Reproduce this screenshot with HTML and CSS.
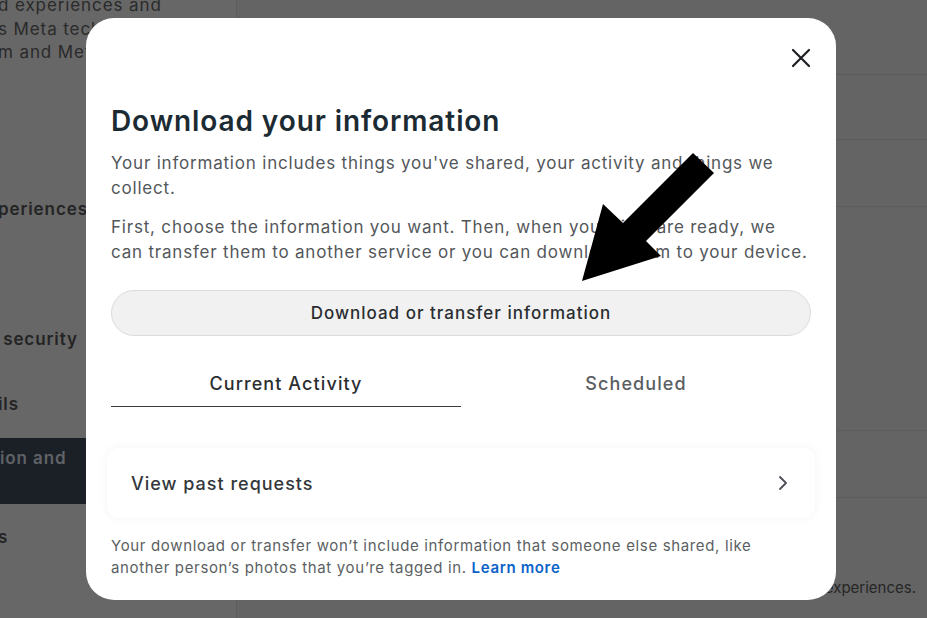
FILE: index.html
```html
<!DOCTYPE html>
<html lang="en">
<head>
<meta charset="utf-8">
<title>Download your information</title>
<link rel="stylesheet" href="styles.css">
</head>
<body>
<div class="page">
  <aside class="sidebar">
    <div class="side-intro">
      <div class="intro-line">d experiences and</div>
      <div class="intro-line">s Meta technologies</div>
      <div class="intro-line">m and Meta</div>
    </div>
    <div class="side-item item-exp">periences</div>
    <div class="side-item item-sec">&nbsp;security</div>
    <div class="side-item item-det">ils</div>
    <div class="side-item item-sel">ion and</div>
    <div class="side-item item-ads">s</div>
  </aside>
  <main class="main">
    <div class="row r1"></div>
    <div class="row r2"></div>
    <div class="row r3"></div>
    <div class="row r4"></div>
    <div class="row r5"></div>
    <div class="row r6"><span class="main-note">Manage your information and experiences.</span></div>
  </main>
</div>

<div class="modal">
  <div class="modal-head">
    <button class="close" aria-label="Close">
      <svg viewBox="0 0 20 20" width="20" height="20"><path d="M2 2 L18 18 M18 2 L2 18" stroke="#1c1e21" stroke-width="2.2" stroke-linecap="round" fill="none"/></svg>
    </button>
  </div>
  <h1 class="title">Download your information</h1>
  <p class="para p1">Your information includes things you've shared, your activity and things we collect.</p>
  <p class="para p2">First, choose the information you want. Then, when your files are ready, we can transfer them to another service or you can download them to your device.</p>
  <button class="primary">Download or transfer information</button>
  <div class="tabs">
    <div class="tab active">Current Activity</div>
    <div class="tab">Scheduled</div>
  </div>
  <div class="card">
    <span class="card-label">View past requests</span>
    <svg class="chev" viewBox="0 0 12 16" width="12" height="16"><path d="M3 2 L9 8 L3 14" stroke="#4b4f56" stroke-width="1.8" fill="none" stroke-linecap="round" stroke-linejoin="round"/></svg>
  </div>
  <p class="foot">Your download or transfer won’t include information that someone else shared, like another person’s photos that you’re tagged in. <a href="#" class="learn">Learn more</a></p>
</div>

<svg class="arrow" width="927" height="618" viewBox="0 0 927 618">
  <polygon points="693,153 714,173 646,241 661,256 582,281 603,204 623,223" fill="#000"/>
</svg>
</body>
</html>
```

FILE: styles.css
```css
* { box-sizing: border-box; }
html, body {
  margin: 0;
  padding: 0;
  width: 927px;
  height: 618px;
  overflow: hidden;
  background: #646464;
  font-family: "Inter", "Noto Sans", sans-serif;
}
.page {
  display: flex;
  height: 618px;
}
.sidebar {
  width: 237px;
  flex: none;
  background: #676767;
  border-right: 1px solid #5d5d5d;
  overflow: hidden;
  font-size: 17px;
  letter-spacing: 0.9px;
}
.side-intro {
  margin-top: -6px;
  margin-left: -2px;
  color: #2a2a2a;
}
.intro-line {
  line-height: 23.5px;
  white-space: nowrap;
}
.side-item {
  font-weight: 600;
  line-height: 24px;
  white-space: nowrap;
  color: #242424;
  margin-left: -2px;
}
.item-exp { margin-top: 132px; }
.item-sec { margin-top: 106px; }
.item-det { margin-top: 41px; }
.item-sel {
  margin-top: 22px;
  margin-left: 0;
  height: 66px;
  padding-top: 8px;
  padding-left: 0;
  background: #1b2027;
  color: #5f6266;
}
.item-ads { margin-top: 21px; }
.main {
  flex: 1;
  display: flex;
  flex-direction: column;
}
.row { border-bottom: 1px solid #5b5b5b; }
.r1 { height: 75px; }
.r2 { height: 65px; }
.r3 { height: 67px; }
.r4 { height: 224px; border-bottom: 1px solid #5d5d5d; }
.r5 { height: 67px; }
.r6 {
  flex: 1;
  border-bottom: none;
  display: flex;
  justify-content: flex-end;
  align-items: flex-end;
  padding: 0 11px 21px 0;
}
.main-note {
  font-size: 15px;
  color: #262626;
  white-space: nowrap;
}

.modal {
  position: absolute;
  left: 86px;
  top: 18px;
  width: 750px;
  height: 582px;
  background: #fff;
  border-radius: 28px;
  padding: 22px 25px 0 25px;
  display: flex;
  flex-direction: column;
}
.modal-head {
  height: 36px;
  display: flex;
  justify-content: flex-end;
  align-items: center;
}
.close {
  border: none;
  background: none;
  padding: 0;
  width: 20px;
  height: 20px;
  display: flex;
}
.title {
  margin: 27px 0 0 0;
  font-size: 28px;
  line-height: 36px;
  font-weight: 600;
  color: #1c2b33;
  letter-spacing: 0.9px;
}
.para {
  margin: 0;
  font-size: 17px;
  line-height: 25px;
  color: #53575b;
  letter-spacing: 0.8px;
}
.p1 { margin-top: 12px; }
.p2 { margin-top: 14px; }
.primary {
  margin-top: 25px;
  height: 46px;
  width: 100%;
  flex: none;
  border-radius: 23px;
  border: 1px solid #dcdcdc;
  background: #f1f1f1;
  font-family: inherit;
  font-size: 17px;
  font-weight: 500;
  color: #2a2d30;
  letter-spacing: 1px;
}
.tabs {
  margin-top: 26px;
  display: flex;
}
.tab {
  flex: 1;
  height: 45px;
  display: flex;
  align-items: center;
  justify-content: center;
  font-size: 18px;
  font-weight: 500;
  color: #5a5d61;
  padding-bottom: 2px;
  letter-spacing: 1.1px;
}
.tab.active {
  color: #2b2e31;
  border-bottom: 1.5px solid #3a3d40;
}
.card {
  margin: 41px -4px 0 -4px;
  height: 70px;
  flex: none;
  border-radius: 12px;
  box-shadow: 0 0 10px rgba(0,0,0,0.05);
  display: flex;
  align-items: center;
  justify-content: space-between;
  padding: 0 26px 0 24px;
}
.card-label {
  font-size: 18px;
  font-weight: 500;
  color: #33373b;
  letter-spacing: 1px;
}
.foot {
  margin: 17px 0 0 0;
  font-size: 15px;
  line-height: 22px;
  color: #5b5f63;
  letter-spacing: 0.65px;
}
.learn {
  color: #0a63c9;
  font-weight: 600;
  text-decoration: none;
}
.arrow {
  position: absolute;
  left: 0;
  top: 0;
  pointer-events: none;
}
```
